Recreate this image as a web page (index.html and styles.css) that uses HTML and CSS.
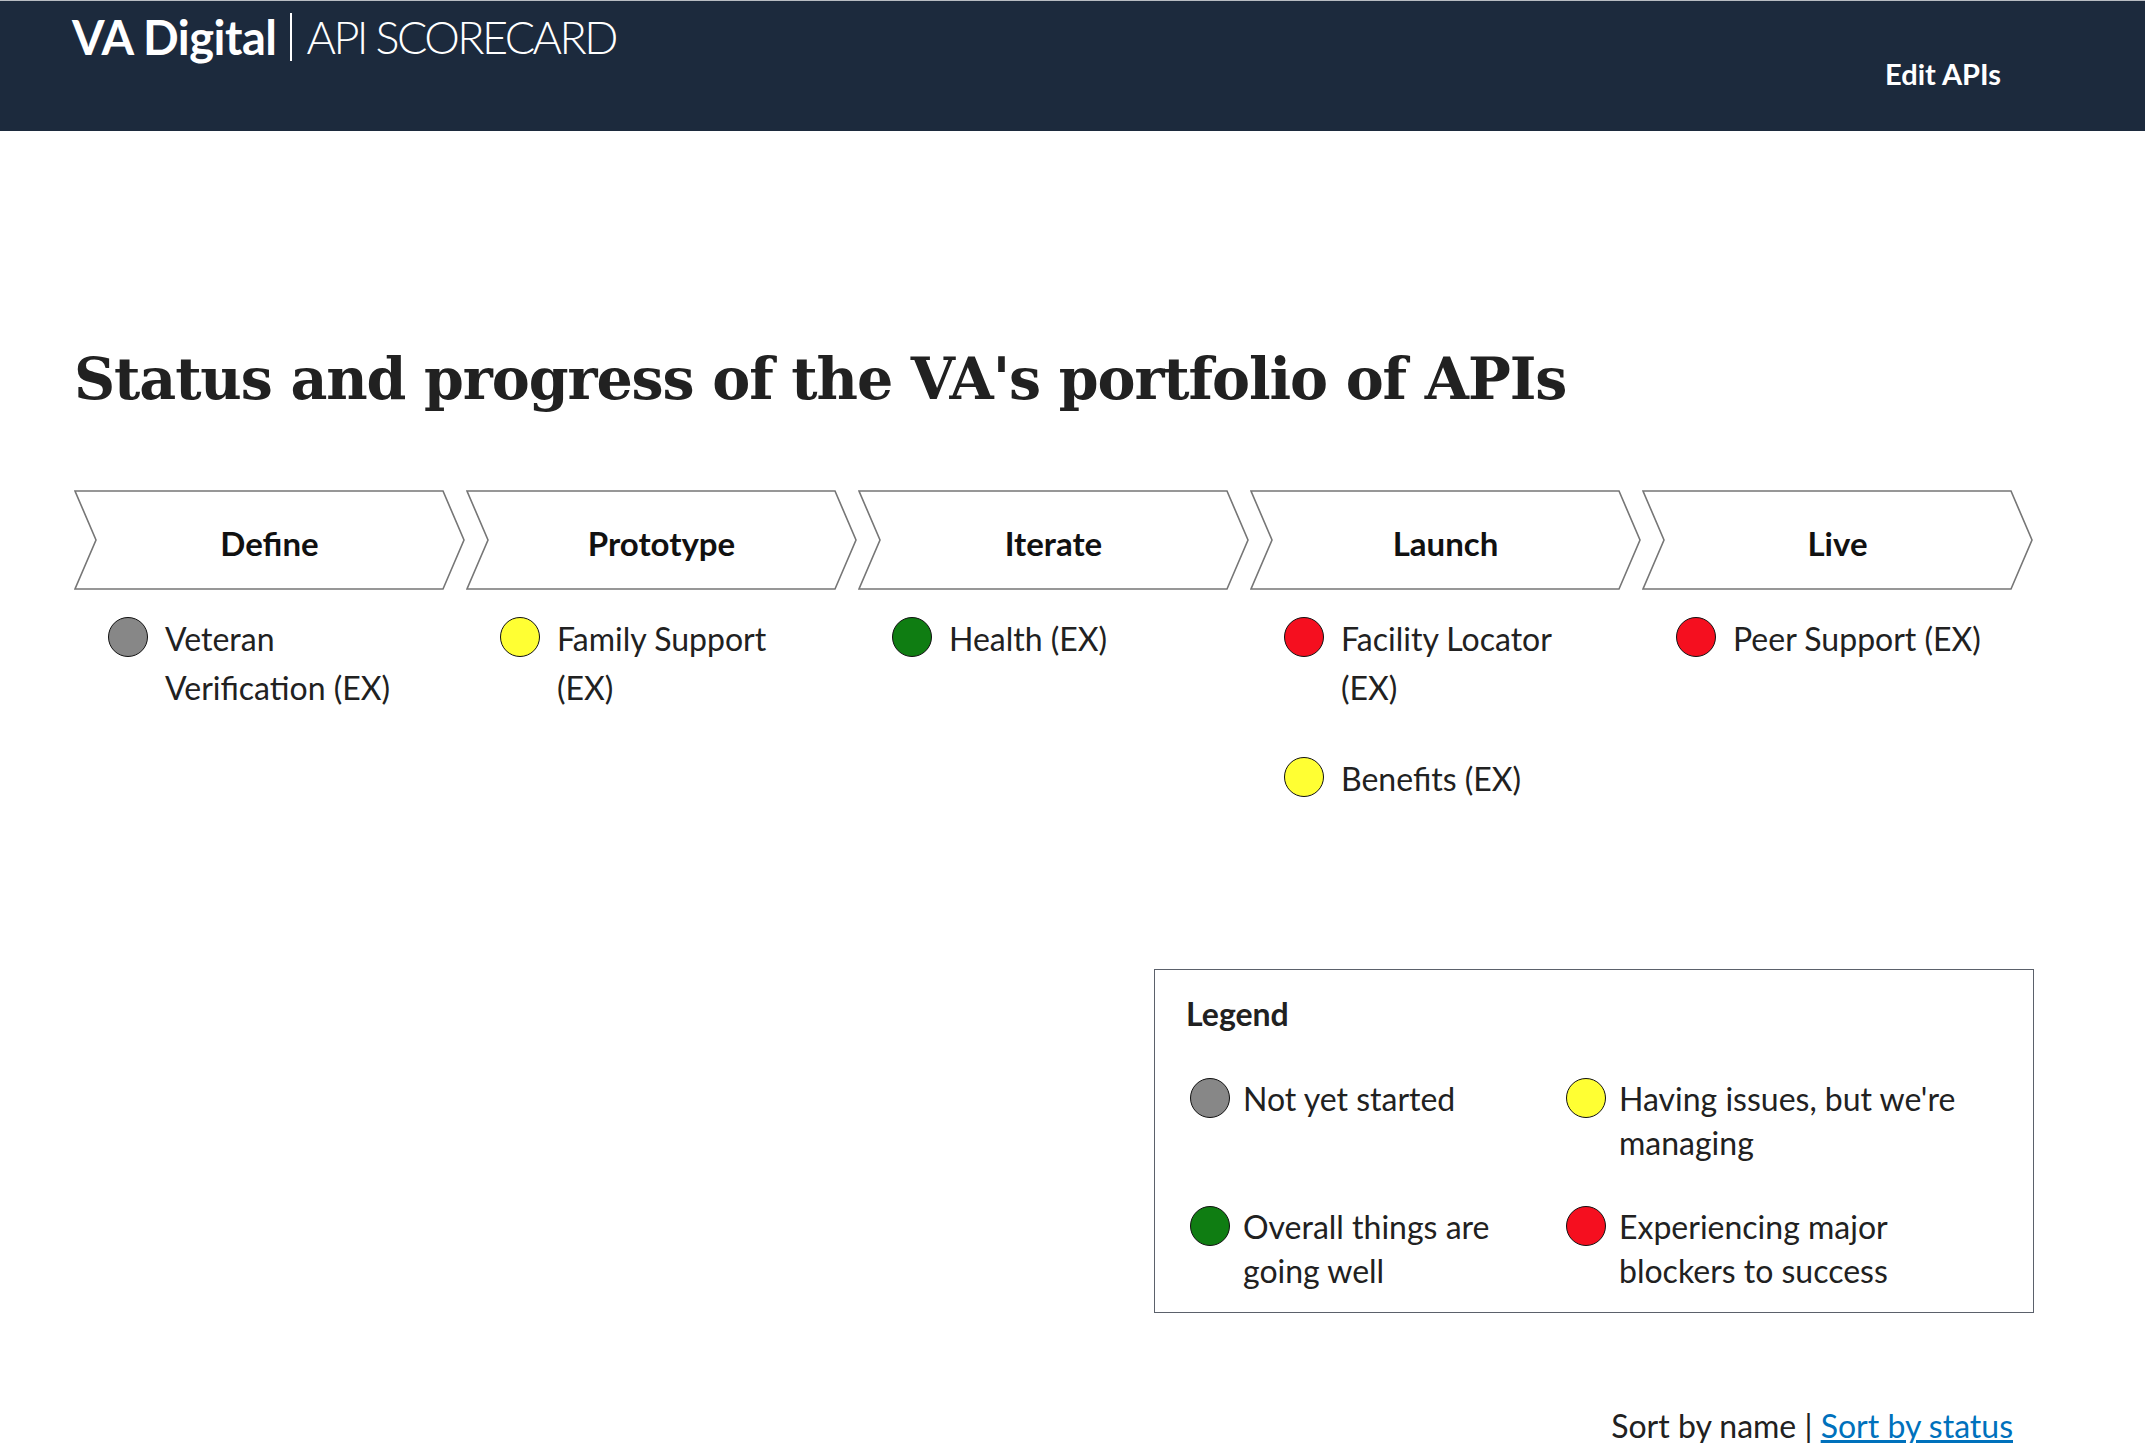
FILE: index.html
```html
<!DOCTYPE html>
<html lang="en">
<head>
<meta charset="utf-8">
<title>API Scorecard</title>
<link rel="stylesheet" href="styles.css">
</head>
<body>
<header class="site-header">
  <div class="brand">
    <span class="brand-bold">VA Digital</span>
    <span class="brand-sep"></span>
    <span class="brand-light">API SCORECARD</span>
  </div>
  <nav class="site-nav"><a class="nav-link" href="#">Edit APIs</a></nav>
</header>

<main class="page">
  <h1 class="title">Status and progress of the VA's portfolio of APIs</h1>

  <div class="stages">
    <section class="stage">
      <div class="chevron">
        <svg class="chevron-shape" viewBox="0 0 391 100" preserveAspectRatio="none"><polygon points="1,1 369,1 390,50 369,99 1,99 22,50"/></svg>
        <span class="chevron-label">Define</span>
      </div>
      <ul class="apis">
        <li class="api"><span class="dot dot-gray"></span><span class="api-name">Veteran Verification (EX)</span></li>
      </ul>
    </section>
    <section class="stage">
      <div class="chevron">
        <svg class="chevron-shape" viewBox="0 0 391 100" preserveAspectRatio="none"><polygon points="1,1 369,1 390,50 369,99 1,99 22,50"/></svg>
        <span class="chevron-label">Prototype</span>
      </div>
      <ul class="apis">
        <li class="api"><span class="dot dot-yellow"></span><span class="api-name">Family Support (EX)</span></li>
      </ul>
    </section>
    <section class="stage">
      <div class="chevron">
        <svg class="chevron-shape" viewBox="0 0 391 100" preserveAspectRatio="none"><polygon points="1,1 369,1 390,50 369,99 1,99 22,50"/></svg>
        <span class="chevron-label">Iterate</span>
      </div>
      <ul class="apis">
        <li class="api"><span class="dot dot-green"></span><span class="api-name">Health (EX)</span></li>
      </ul>
    </section>
    <section class="stage">
      <div class="chevron">
        <svg class="chevron-shape" viewBox="0 0 391 100" preserveAspectRatio="none"><polygon points="1,1 369,1 390,50 369,99 1,99 22,50"/></svg>
        <span class="chevron-label">Launch</span>
      </div>
      <ul class="apis">
        <li class="api"><span class="dot dot-red"></span><span class="api-name">Facility Locator (EX)</span></li>
        <li class="api"><span class="dot dot-yellow"></span><span class="api-name">Benefits (EX)</span></li>
      </ul>
    </section>
    <section class="stage">
      <div class="chevron">
        <svg class="chevron-shape" viewBox="0 0 391 100" preserveAspectRatio="none"><polygon points="1,1 369,1 390,50 369,99 1,99 22,50"/></svg>
        <span class="chevron-label">Live</span>
      </div>
      <ul class="apis">
        <li class="api"><span class="dot dot-red"></span><span class="api-name">Peer Support (EX)</span></li>
      </ul>
    </section>
  </div>

  <div class="legend-row">
    <section class="legend">
      <h2 class="legend-title">Legend</h2>
      <ul class="legend-grid">
        <li class="legend-item"><span class="dot dot-gray"></span><span class="legend-text">Not yet started</span></li>
        <li class="legend-item"><span class="dot dot-yellow"></span><span class="legend-text">Having issues, but we're managing</span></li>
        <li class="legend-item"><span class="dot dot-green"></span><span class="legend-text">Overall things are going well</span></li>
        <li class="legend-item"><span class="dot dot-red"></span><span class="legend-text">Experiencing major blockers to success</span></li>
      </ul>
    </section>
  </div>

  <div class="sort">Sort by name | <a class="sort-link" href="#">Sort by status</a></div>
</main>
</body>
</html>
```

FILE: styles.css
```css
html, body {
  margin: 0;
  padding: 0;
  background: #ffffff;
}

body {
  font-family: Lato, "Open Sans", "Liberation Sans", sans-serif;
  color: #212121;
}

.site-header {
  height: 130px;
  background: #1c2a3d;
  border-top: 1px solid #b8bcc2;
  display: flex;
  justify-content: space-between;
  align-items: flex-start;
  padding: 0 144px 0 72px;
}

.brand {
  display: flex;
  align-items: center;
  padding-top: 12px;
  color: #ffffff;
  font-size: 47px;
  line-height: 48px;
}

.brand-bold {
  font-weight: 700;
  letter-spacing: -0.5px;
}

.brand-sep {
  width: 2px;
  height: 48px;
  background: #ffffff;
  margin: 0 14px 0 14px;
}

.brand-light {
  font-weight: 300;
  font-size: 45px;
  letter-spacing: -2.6px;
}

.site-nav {
  padding-top: 57px;
}

.nav-link {
  color: #ffffff;
  text-decoration: none;
  font-weight: 700;
  font-size: 29px;
  line-height: 32px;
}

.page {
  padding: 0 111px 0 74px;
}

.title {
  margin: 0;
  padding-top: 212px;
  font-family: "DejaVu Serif", "Liberation Serif", serif;
  font-weight: 700;
  font-size: 57px;
  line-height: 72px;
  letter-spacing: -1.1px;
  color: #212121;
}

.stages {
  margin-top: 75px;
  display: grid;
  grid-template-columns: repeat(5, 1fr);
}

.chevron {
  display: grid;
  height: 100px;
  width: 391px;
}

.chevron-shape,
.chevron-label {
  grid-area: 1 / 1;
}

.chevron-shape {
  width: 391px;
  height: 100px;
  fill: #ffffff;
  stroke: #767676;
  stroke-width: 1.6;
}

.chevron-label {
  align-self: center;
  justify-self: center;
  padding-top: 5px;
  font-weight: 700;
  font-size: 33px;
  line-height: 40px;
  color: #111111;
}

.apis {
  list-style: none;
  margin: 0;
  padding: 24px 42px 0 34px;
  display: flex;
  flex-direction: column;
  gap: 42px;
}

.api {
  display: flex;
  align-items: flex-start;
  gap: 17px;
  font-size: 32px;
  line-height: 49px;
}

.dot {
  flex: none;
  width: 38px;
  height: 38px;
  border: 1.5px solid #111111;
  border-radius: 50%;
  margin-top: 3px;
}

.dot-gray { background: #878787; }
.dot-yellow { background: #ffff33; }
.dot-green { background: #0f7d12; }
.dot-red { background: #f50f1f; }

.legend-row {
  display: flex;
  justify-content: flex-end;
  margin-top: 166px;
}

.legend {
  width: 880px;
  box-sizing: border-box;
  border: 1.5px solid #5b616b;
  padding: 22px 30px 19px 31px;
}

.legend-title {
  margin: 0;
  font-size: 32px;
  line-height: 44px;
  font-weight: 700;
}

.legend-grid {
  list-style: none;
  margin: 41px 0 0 0;
  padding: 0;
  display: grid;
  grid-template-columns: 376px 1fr;
  row-gap: 40px;
}

.legend-item {
  display: flex;
  align-items: flex-start;
  gap: 13px;
  padding-left: 4px;
  padding-right: 30px;
  font-size: 32px;
  line-height: 44px;
}

.legend-item .dot {
  margin-top: 1px;
}

.sort {
  margin-top: 88px;
  padding-right: 21px;
  text-align: right;
  font-size: 32px;
  line-height: 49px;
}

.sort-link {
  color: #0071bc;
}
```
